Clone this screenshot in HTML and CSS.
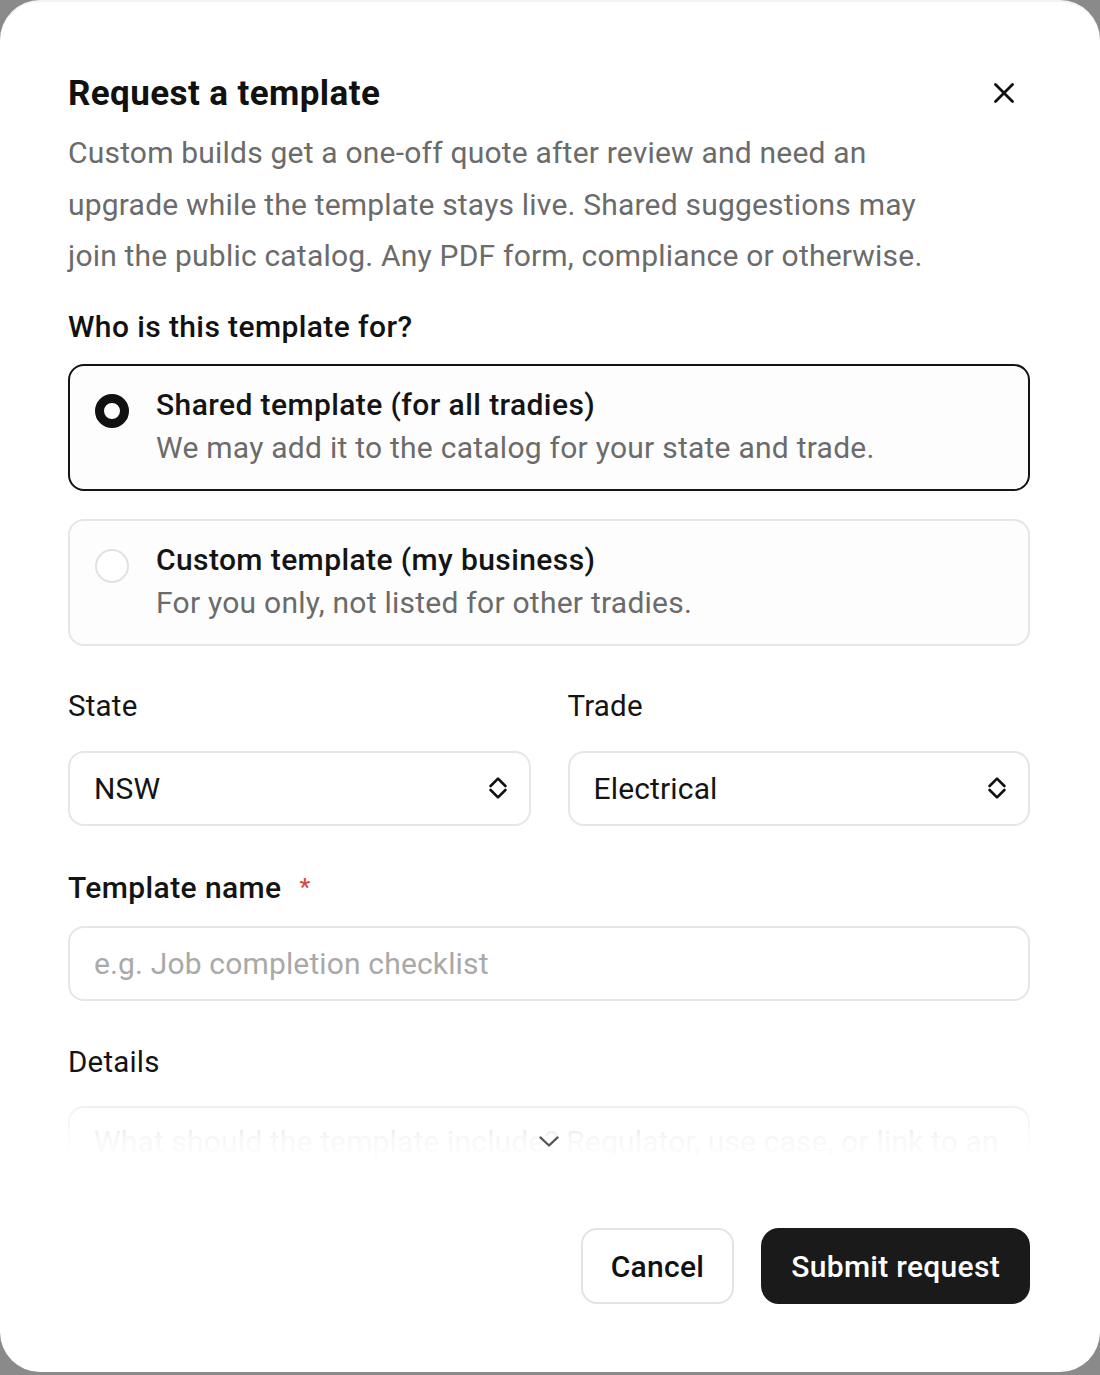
FILE: index.html
```html
<!DOCTYPE html>
<html lang="en">
<head>
<meta charset="utf-8">
<title>Request a template</title>
<link rel="stylesheet" href="styles.css">
</head>
<body>
<div class="backdrop">
  <div class="modal" role="dialog" aria-labelledby="dlg-title">
    <div class="modal-body">
      <header class="modal-header">
        <div class="header-text">
          <h2 class="title" id="dlg-title">Request a template</h2>
          <p class="desc">Custom builds get a one-off quote after review and need an upgrade while the template stays live. Shared suggestions may join the public catalog. Any PDF form, compliance or otherwise.</p>
        </div>
        <button class="close" aria-label="Close">
          <svg viewBox="0 0 20 20" width="20" height="20"><path d="M1.5 1.5 L18.5 18.5 M18.5 1.5 L1.5 18.5" fill="none" stroke="#111" stroke-width="2.8" stroke-linecap="round"/></svg>
        </button>
      </header>

      <section class="audience">
        <h3 class="question">Who is this template for?</h3>
        <div class="options">
          <div class="option selected">
            <span class="radio"></span>
            <div class="option-text">
              <div class="option-title">Shared template (for all tradies)</div>
              <div class="option-sub">We may add it to the catalog for your state and trade.</div>
            </div>
          </div>
          <div class="option">
            <span class="radio"></span>
            <div class="option-text">
              <div class="option-title">Custom template (my business)</div>
              <div class="option-sub">For you only, not listed for other tradies.</div>
            </div>
          </div>
        </div>
      </section>

      <div class="field-row">
        <div class="field">
          <div class="label">State</div>
          <div class="select">
            <span>NSW</span>
            <svg class="updown" viewBox="0 0 18 22" width="18" height="22"><path d="M1.6 9 L9 1.6 L16.4 9 M1.6 13 L9 20.4 L16.4 13" fill="none" stroke="#111" stroke-width="2.6" stroke-linecap="round" stroke-linejoin="round"/></svg>
          </div>
        </div>
        <div class="field">
          <div class="label">Trade</div>
          <div class="select">
            <span>Electrical</span>
            <svg class="updown" viewBox="0 0 18 22" width="18" height="22"><path d="M1.6 9 L9 1.6 L16.4 9 M1.6 13 L9 20.4 L16.4 13" fill="none" stroke="#111" stroke-width="2.6" stroke-linecap="round" stroke-linejoin="round"/></svg>
          </div>
        </div>
      </div>

      <div class="field name-field">
        <div class="label strong">Template name <span class="req">*</span></div>
        <div class="input placeholder">e.g. Job completion checklist</div>
      </div>

      <div class="field details-field">
        <div class="label">Details</div>
        <div class="textarea placeholder">What should the template include? Regulator, use case, or link to an</div>
      </div>

      <div class="fade"></div>
      <svg class="more" viewBox="0 0 20 11" width="20" height="11"><path d="M1.5 1.5 L10 9.5 L18.5 1.5" fill="none" stroke="#555" stroke-width="2.4" stroke-linecap="round" stroke-linejoin="round"/></svg>
    </div>

    <footer class="modal-footer">
      <button class="btn btn-secondary">Cancel</button>
      <button class="btn btn-primary">Submit request</button>
    </footer>
  </div>
</div>
</body>
</html>
```

FILE: styles.css
```css
* { box-sizing: border-box; }
html, body { margin: 0; padding: 0; }
body {
  background: #8a8a8a;
  font-family: Roboto, "Liberation Sans", sans-serif;
  color: #111;
}
.backdrop {
  width: 1100px;
  height: 1375px;
  overflow: hidden;
}
.modal {
  width: 1100px;
  height: 1372px;
  background: #fff;
  border-radius: 40px;
  border-top: 2px solid #f3f3f3;
  display: flex;
  flex-direction: column;
}
.modal-body {
  position: relative;
  height: 1160px;
  overflow: hidden;
  padding: 72px 70px 0 68px;
}
.modal-header {
  display: flex;
  align-items: flex-start;
  gap: 24px;
}
.header-text { flex: 1; padding-right: 30px; }
.title {
  margin: 0;
  font-size: 35px;
  line-height: 40px;
  font-weight: 700;
  letter-spacing: 0.4px;
  color: #111;
}
.desc {
  margin: 13px 0 0;
  font-size: 30px;
  line-height: 51.5px;
  letter-spacing: 0.2px;
  color: #6b6b6b;
}
.close {
  margin: 8px 15px 0 0;
  width: 22px;
  height: 22px;
  padding: 1px;
  border: 0;
  background: none;
  display: flex;
}
.question {
  margin: 25px 0 0;
  font-size: 30px;
  line-height: 40px;
  font-weight: 500;
  letter-spacing: 0.4px;
  color: #111;
}
.options {
  margin-top: 17px;
  display: flex;
  flex-direction: column;
  gap: 28px;
}
.option {
  display: flex;
  align-items: flex-start;
  gap: 27px;
  padding: 17px 24px 20px 25px;
  border: 2px solid #e6e6e6;
  border-radius: 16px;
  background: #fdfdfd;
}
.option.selected { border-color: #141414; }
.radio {
  flex: none;
  width: 34px;
  height: 34px;
  margin-top: 11px;
  border-radius: 50%;
  border: 2px solid #e2e2e2;
  background: #fff;
}
.option.selected .radio {
  border: 9px solid #111;
  background: #fff;
}
.option-title {
  font-size: 30px;
  line-height: 43px;
  font-weight: 500;
  letter-spacing: 0.4px;
  color: #141414;
}
.option-sub {
  font-size: 30px;
  line-height: 43px;
  letter-spacing: 0.25px;
  color: #6b6b6b;
}
.field-row {
  margin-top: 40px;
  display: grid;
  grid-template-columns: 1fr 1fr;
  gap: 37px;
}
.label {
  font-size: 29.5px;
  line-height: 40px;
  letter-spacing: 0.2px;
  color: #141414;
}
.label.strong { font-weight: 500; font-size: 30px; letter-spacing: 0.4px; }
.req {
  color: #d5483b;
  font-size: 24px;
  margin-left: 10px;
  vertical-align: 3px;
}
.select, .input, .textarea {
  border: 2px solid #e6e6e6;
  border-radius: 16px;
  font-size: 30px;
  letter-spacing: 0.15px;
  color: #141414;
}
.select {
  margin-top: 25px;
  height: 75px;
  display: flex;
  align-items: center;
  justify-content: space-between;
  padding: 0 22px 0 24px;
}
.name-field { margin-top: 41px; }
.input {
  margin-top: 18px;
  height: 75px;
  display: flex;
  align-items: center;
  padding: 0 24px;
}
.placeholder { color: #a9a9a9; }
.details-field { margin-top: 41px; }
.textarea {
  margin-top: 24px;
  height: 200px;
  padding: 16px 24px;
  line-height: 36px;
  white-space: nowrap;
  overflow: hidden;
}
.fade {
  position: absolute;
  left: 0;
  right: 0;
  bottom: 0;
  height: 82px;
  background: linear-gradient(to bottom, rgba(255,255,255,0) 0%, rgba(255,255,255,0.45) 35%, rgba(255,255,255,0.9) 70%, #fff 100%);
}
.more {
  position: absolute;
  left: 539px;
  bottom: 15px;
}
.modal-footer {
  display: flex;
  justify-content: flex-end;
  gap: 27px;
  padding: 66px 70px 0;
}
.btn {
  height: 76px;
  padding: 0 28px;
  font-family: inherit;
  font-size: 30px;
  font-weight: 500;
  letter-spacing: 0.3px;
  border-radius: 16px;
  cursor: pointer;
}
.btn-secondary {
  background: #fff;
  color: #111;
  border: 2px solid #e3e3e3;
}
.btn-primary {
  background: #1a1a1a;
  color: #fff;
  border: 2px solid #1a1a1a;
  border-radius: 18px;
}
```
